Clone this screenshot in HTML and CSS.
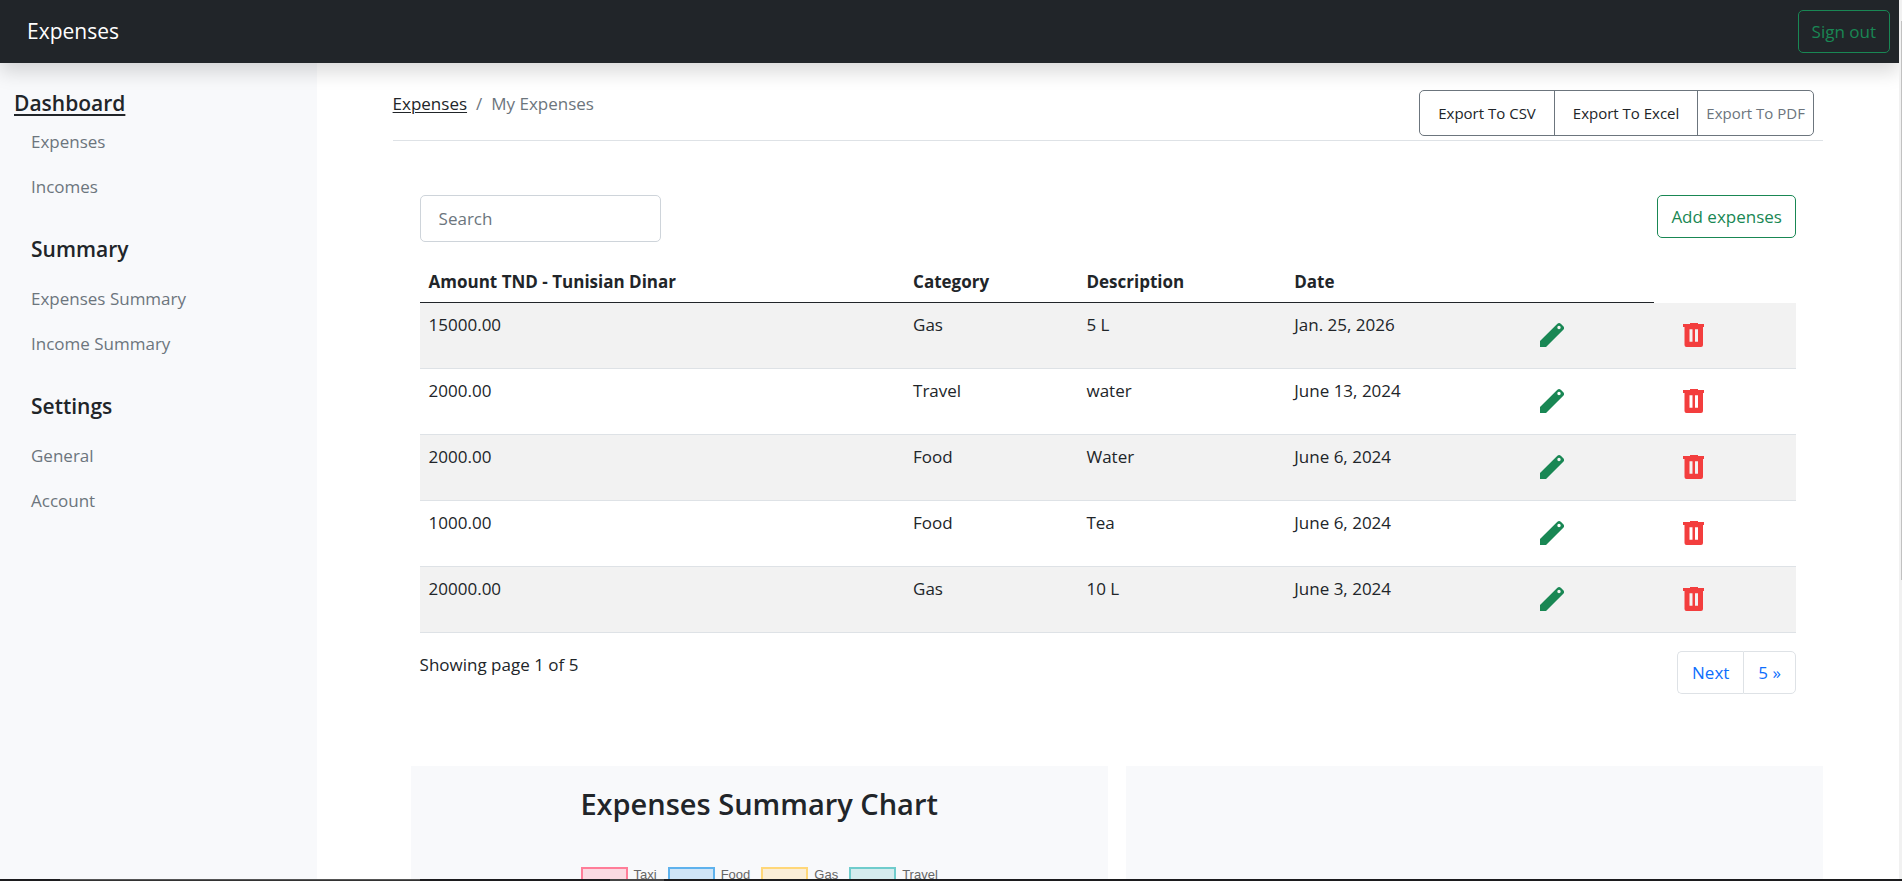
FILE: index.html
```html
<!DOCTYPE html>
<html lang="en">
<head>
<meta charset="utf-8">
<title>Expenses</title>
<link rel="stylesheet" href="styles.css">
</head>
<body>
<svg class="sprite" aria-hidden="true">
  <symbol id="pencil" viewBox="0 0 24 24"><path fill-rule="evenodd" d="M0 24v-6L17.400 .8a2.600 2.600 0 0 1 3.400 0L23.300 3.300a2.600 2.600 0 0 1 0 3.500L6 24zM19 2.800a1.700 1.700 0 1 0 0 3.400a1.700 1.700 0 1 0 0-3.400z"/></symbol>
  <symbol id="trash" viewBox="0 0 21 24"><path fill-rule="evenodd" d="M7 0h8v1h6v3h-1v18a2 2 0 0 1-2 2H3.500a2 2 0 0 1-2-2V4H0V1h7zM6.500 6.200v12.600h3V6.200zM12 6.200v12.600h3V6.200z"/></symbol>
</svg>
<header class="topbar">
  <a class="brand" href="#">Expenses</a>
  <button class="btn btn-success" type="button">Sign out</button>
</header>
<div class="layout">
  <nav class="sidebar">
    <h2 class="side-title side-current"><a href="#">Dashboard</a></h2>
    <ul class="side-links side-first"><li><a href="#">Expenses</a></li><li><a href="#">Incomes</a></li></ul>
    <h2 class="side-title">Summary</h2>
    <ul class="side-links"><li><a href="#">Expenses Summary</a></li><li><a href="#">Income Summary</a></li></ul>
    <h2 class="side-title">Settings</h2>
    <ul class="side-links"><li><a href="#">General</a></li><li><a href="#">Account</a></li></ul>
  </nav>
  <main class="main">
    <div class="page-head">
      <nav class="crumbs"><a href="#">Expenses</a><span>/</span><span>My Expenses</span></nav>
      <div class="exports">
        <button type="button">Export To CSV</button><button type="button">Export To Excel</button><button class="muted" type="button">Export To PDF</button>
      </div>
    </div>
    <section class="panel">
      <div class="tools">
        <input class="search" type="text" placeholder="Search" aria-label="Search">
        <button class="btn btn-success" type="button">Add expenses</button>
      </div>
      <table class="table">
        <colgroup><col class="c-amount"><col class="c-category"><col class="c-description"><col class="c-date"><col class="c-edit"><col></colgroup>
        <thead><tr><th>Amount TND - Tunisian Dinar</th><th>Category</th><th>Description</th><th>Date</th><th></th><td></td></tr></thead>
        <tbody>
          <tr><td>15000.00</td><td>Gas</td><td>5 L</td><td>Jan. 25, 2026</td><td><button class="icon edit" type="button" aria-label="Edit"><svg><use href="#pencil"/></svg></button></td><td><button class="icon delete" type="button" aria-label="Delete"><svg><use href="#trash"/></svg></button></td></tr>
          <tr><td>2000.00</td><td>Travel</td><td>water</td><td>June 13, 2024</td><td><button class="icon edit" type="button" aria-label="Edit"><svg><use href="#pencil"/></svg></button></td><td><button class="icon delete" type="button" aria-label="Delete"><svg><use href="#trash"/></svg></button></td></tr>
          <tr><td>2000.00</td><td>Food</td><td>Water</td><td>June 6, 2024</td><td><button class="icon edit" type="button" aria-label="Edit"><svg><use href="#pencil"/></svg></button></td><td><button class="icon delete" type="button" aria-label="Delete"><svg><use href="#trash"/></svg></button></td></tr>
          <tr><td>1000.00</td><td>Food</td><td>Tea</td><td>June 6, 2024</td><td><button class="icon edit" type="button" aria-label="Edit"><svg><use href="#pencil"/></svg></button></td><td><button class="icon delete" type="button" aria-label="Delete"><svg><use href="#trash"/></svg></button></td></tr>
          <tr><td>20000.00</td><td>Gas</td><td>10 L</td><td>June 3, 2024</td><td><button class="icon edit" type="button" aria-label="Edit"><svg><use href="#pencil"/></svg></button></td><td><button class="icon delete" type="button" aria-label="Delete"><svg><use href="#trash"/></svg></button></td></tr>
        </tbody>
      </table>
      <div class="table-foot">
        <span>Showing page 1 of 5</span>
        <nav class="pages" aria-label="Pages"><a href="#">Next</a><a href="#">5 »</a></nav>
      </div>
    </section>
    <div class="charts">
      <section class="chart">
        <h1>Expenses Summary Chart</h1>
        <ul class="legend">
          <li><i class="swatch taxi"></i>Taxi</li><li><i class="swatch food"></i>Food</li><li><i class="swatch gas"></i>Gas</li><li><i class="swatch travel"></i>Travel</li>
        </ul>
      </section>
      <section class="chart"></section>
    </div>
  </main>
</div>
<div class="scroll-track"><div class="scroll-thumb"></div></div>
<div class="taskbar"><span class="task-search"></span><span class="task-app"></span></div>
</body>
</html>
```
FILE: styles.css
```css
* { box-sizing: border-box; }
body {
  margin: 0;
  height: 100vh;
  overflow: hidden;
  padding-right: 3px;
  display: flex;
  flex-direction: column;
  font: 17px/27px "Open Sans", "Noto Sans", sans-serif;
  color: #212529;
  background: #fff;
}
h1, h2, ul { margin: 0; padding: 0; font-weight: 600; list-style: none; }
ul { font-weight: 400; }
a { color: inherit; text-decoration: none; }
button, input { font: inherit; color: inherit; background: none; }
.sprite { display: none; }

.topbar {
  flex: none;
  position: relative;
  z-index: 2;
  display: flex;
  justify-content: space-between;
  align-items: center;
  padding: 10px 9px 10px 27px;
  background: #212529;
  box-shadow: 0 9px 18px rgba(0, 0, 0, .15);
}
.brand { font-size: 21px; color: #fff; }
.btn { padding: 7px 13px; border: 1px solid; border-radius: 5px; }
.btn-success { color: #198754; }

.layout { flex: 1; display: grid; grid-template-columns: 1fr 5fr; min-height: 0; overflow: hidden; }
.sidebar { padding: 27px 14px; background: #f8f9fb; }
.side-title { padding: 23px 17px 9px; font-size: 21px; }
.side-current { padding: 0; }
.side-current a { text-decoration: underline; text-decoration-thickness: 2px; text-underline-offset: 3px; }
.side-links { padding: 4px 17px; color: #6c757d; }
.side-first { padding-top: 2px; }
.side-links li { padding: 9px 0; }

.main { min-width: 0; padding: 27px 4vw 0; }
.page-head {
  display: flex;
  justify-content: space-between;
  align-items: flex-start;
  padding-right: 9px;
  padding-bottom: 4px;
  border-bottom: 1px solid #dee2e6;
}
.crumbs { display: flex; gap: 9px; color: #6c757d; }
.crumbs a { color: #212529; text-decoration: underline; text-underline-offset: 2px; }
.exports { display: flex; font-size: 15px; line-height: 24px; }
.exports button { padding: 10px 18px; border: 1px solid #6c757d; }
.exports button + button { margin-left: -1px; }
.exports button:first-child { border-radius: 5px 0 0 5px; }
.exports .muted { padding: 10px 8px; color: #6c757d; border-radius: 0 5px 5px 0; }

.panel { padding: 54px 27px 0; }
.tools { display: flex; justify-content: space-between; align-items: flex-start; }
.search { width: 241px; height: 47px; padding: 0 18px; border: 1px solid #ced4da; border-radius: 5px; }
.search::placeholder { color: #6c757d; opacity: 1; }

.table { width: 100%; margin-top: 17px; border-collapse: separate; border-spacing: 0; table-layout: fixed; }
.table th { padding: 9px 9px 7px; font-weight: 700; text-align: left; border-bottom: 1px solid #212529; }
.table td { padding: 8px 9px; vertical-align: top; }
.table tbody td { height: 66px; border-bottom: 1px solid #dee2e6; }
.table tbody tr:nth-child(odd) { background: #f2f2f2; }
.c-amount { width: 35.2%; }
.c-category { width: 12.6%; }
.c-description { width: 15.1%; }
.c-date { width: 17%; }
.c-edit { width: 9.8%; }
.icon { display: block; padding: 12px 20px 0; border: 0; }
.icon svg { display: block; height: 24px; }
.edit { padding-left: 12px; color: #198754; }
.edit svg { width: 24px; fill: currentColor; }
.delete { color: #f33e3e; }
.delete svg { width: 21px; fill: currentColor; }

.table-foot { display: flex; justify-content: space-between; padding-top: 18px; }
.pages { display: flex; color: #0d6efd; }
.pages a { padding: 7px 14px; border: 1px solid #dee2e6; }
.pages a:first-child { border-right: 0; border-radius: 5px 0 0 5px; }
.pages a:last-child { border-radius: 0 5px 5px 0; }

.charts { display: grid; grid-template-columns: 1fr 1fr; gap: 18px; padding: 72px 0 0 18px; }
.chart { height: 420px; padding-top: 18px; background: #f8f9fb; text-align: center; }
.chart h1 { font-size: 29px; line-height: 40px; }
.legend { display: flex; justify-content: center; gap: 11px; padding-top: 43px; font: 13px/16px "Liberation Sans", Arial, sans-serif; color: #666; }
.legend li { display: flex; gap: 6px; }
.swatch { width: 47px; height: 16px; border: 2px solid; }
.taxi { background: #fadae2; border-color: #ff7d98; }
.food { background: #d0e5f7; border-color: #5eb2ed; }
.gas { background: #faeed8; border-color: #ffd778; }
.travel { background: #d5ecee; border-color: #6fcccc; }

.scroll-track { position: fixed; top: 0; right: 0; bottom: 0; width: 3px; padding-top: 21px; background: #f1f1f1; z-index: 3; }
.scroll-thumb { width: 1px; height: 65%; margin-left: auto; background: #c1c1c1; }
.taskbar { position: fixed; left: 0; right: 0; bottom: 0; height: 2px; padding-left: 60px; display: flex; gap: 190px; background: #1c1c1e; z-index: 4; }
.task-search { width: 360px; background: #333; border-top: 1px solid #555; }
.task-app { width: 54px; background: #444; }
```
